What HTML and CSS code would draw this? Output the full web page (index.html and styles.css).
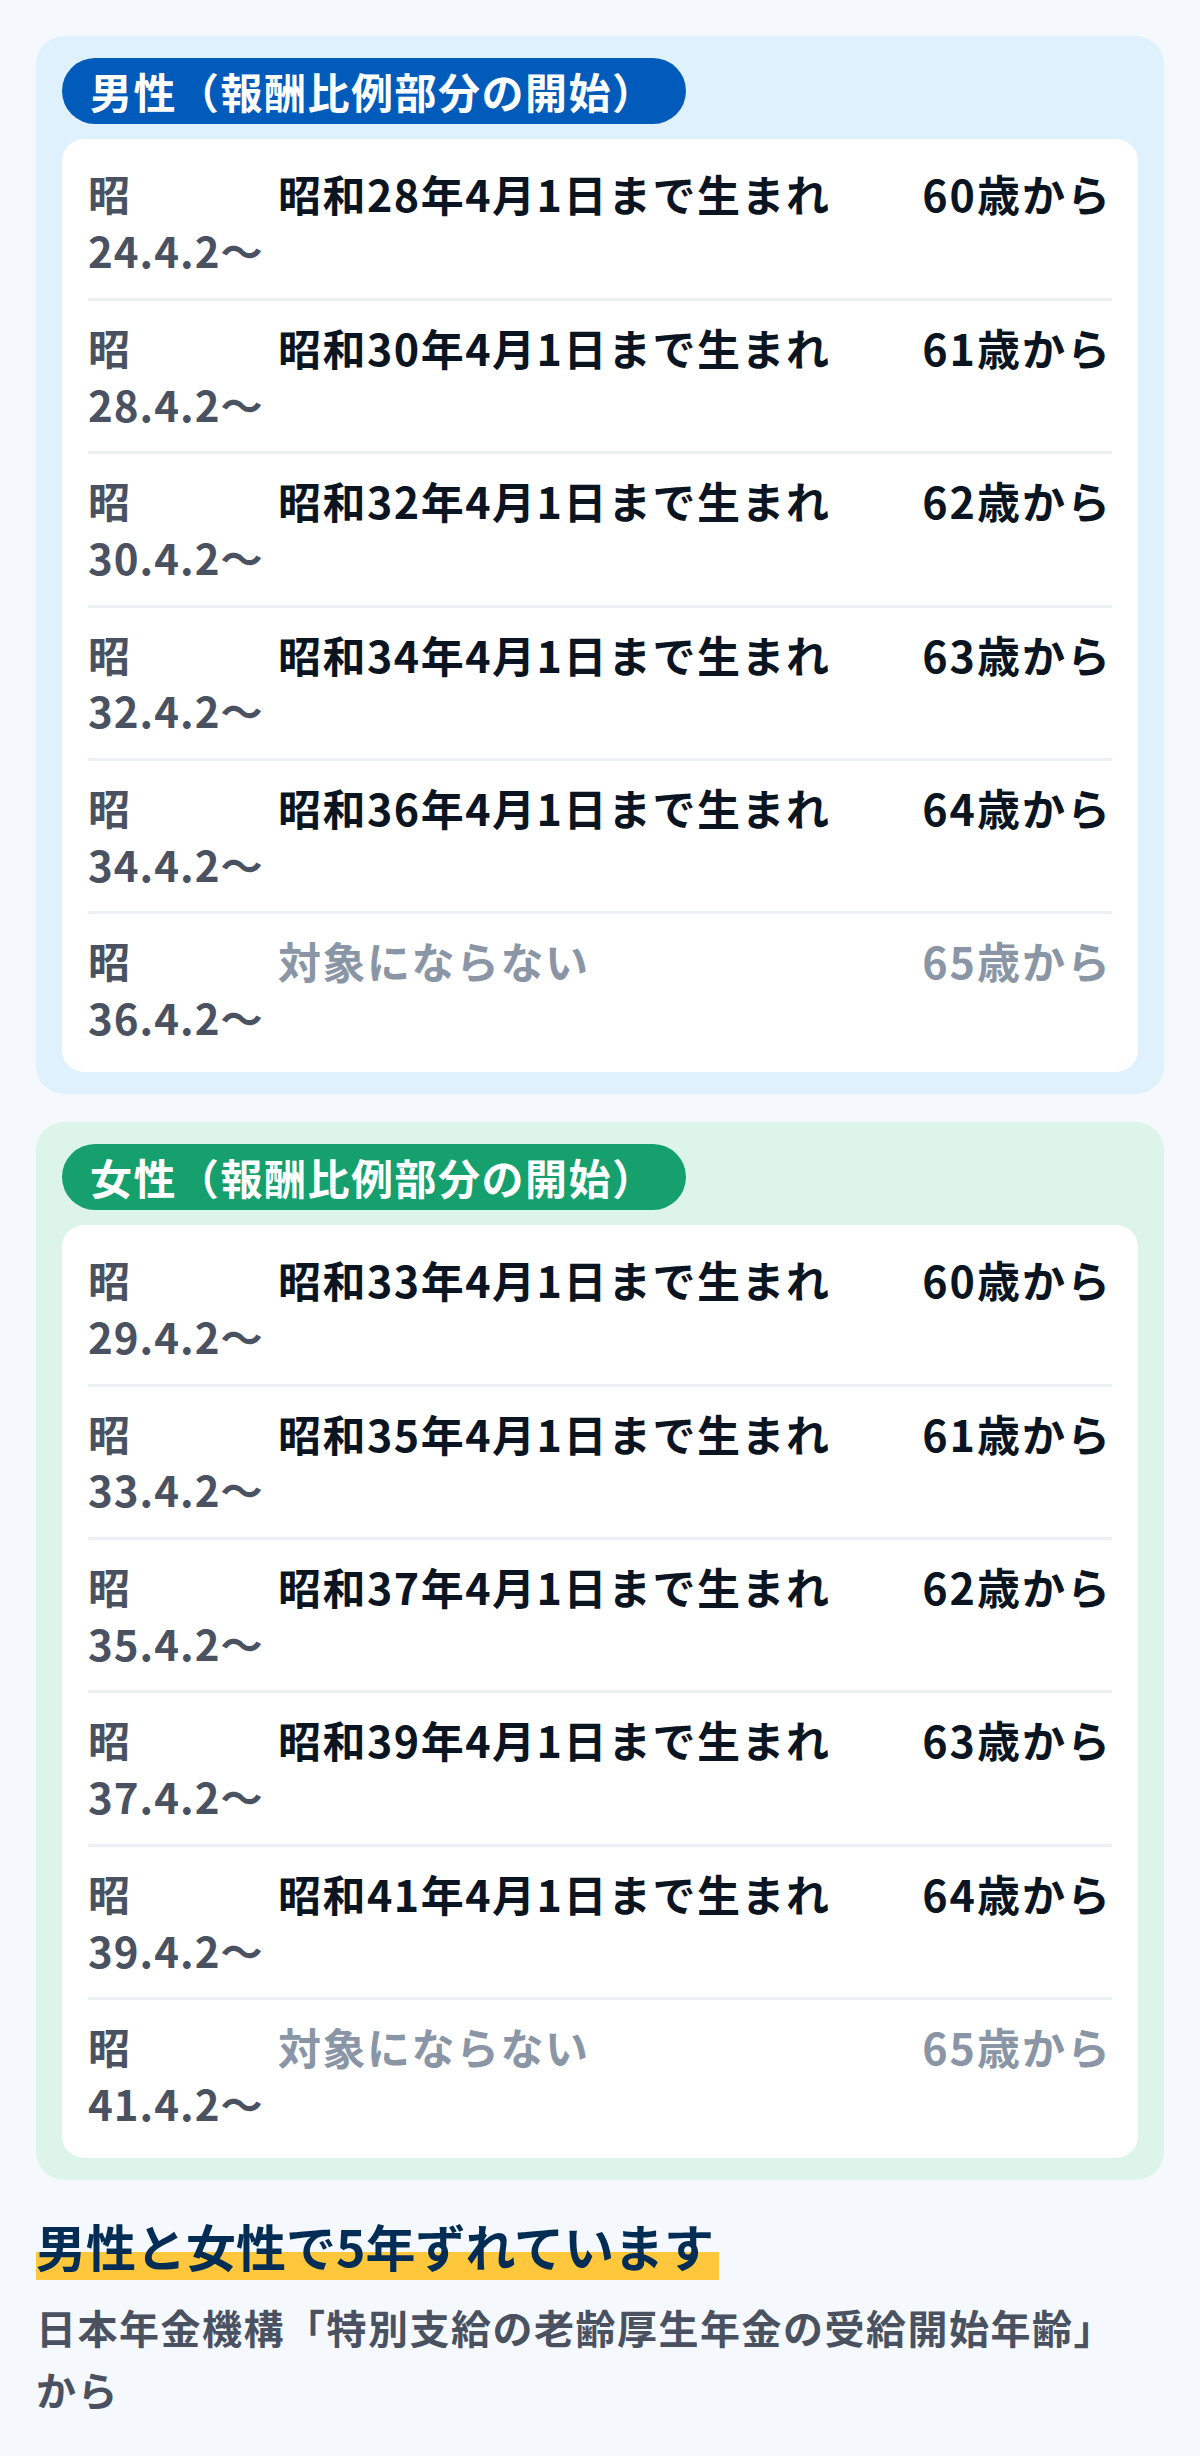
FILE: index.html
```html
<!DOCTYPE html>
<html lang="ja">
<head>
    <meta charset="UTF-8">
    <meta name="viewport" content="width=device-width, initial-scale=1.0">
    <title>特別支給の老齢厚生年金 受給開始年齢</title>
    <link rel="stylesheet" href="styles.css">
</head>
<body>

    <div class="page">

        <section class="group group-male">
            <h3 class="group-badge">男性（報酬比例部分の開始）</h3>
            <div class="table-card">
                <div class="row">
                    <span class="row-from">昭24.4.2〜</span>
                    <span class="row-until">昭和28年4月1日まで生まれ</span>
                    <span class="row-age">60歳から</span>
                </div>
                <div class="row">
                    <span class="row-from">昭28.4.2〜</span>
                    <span class="row-until">昭和30年4月1日まで生まれ</span>
                    <span class="row-age">61歳から</span>
                </div>
                <div class="row">
                    <span class="row-from">昭30.4.2〜</span>
                    <span class="row-until">昭和32年4月1日まで生まれ</span>
                    <span class="row-age">62歳から</span>
                </div>
                <div class="row">
                    <span class="row-from">昭32.4.2〜</span>
                    <span class="row-until">昭和34年4月1日まで生まれ</span>
                    <span class="row-age">63歳から</span>
                </div>
                <div class="row">
                    <span class="row-from">昭34.4.2〜</span>
                    <span class="row-until">昭和36年4月1日まで生まれ</span>
                    <span class="row-age">64歳から</span>
                </div>
                <div class="row row-none">
                    <span class="row-from">昭36.4.2〜</span>
                    <span class="row-until">対象にならない</span>
                    <span class="row-age">65歳から</span>
                </div>
            </div>
        </section>

        <section class="group group-female">
            <h3 class="group-badge">女性（報酬比例部分の開始）</h3>
            <div class="table-card">
                <div class="row">
                    <span class="row-from">昭29.4.2〜</span>
                    <span class="row-until">昭和33年4月1日まで生まれ</span>
                    <span class="row-age">60歳から</span>
                </div>
                <div class="row">
                    <span class="row-from">昭33.4.2〜</span>
                    <span class="row-until">昭和35年4月1日まで生まれ</span>
                    <span class="row-age">61歳から</span>
                </div>
                <div class="row">
                    <span class="row-from">昭35.4.2〜</span>
                    <span class="row-until">昭和37年4月1日まで生まれ</span>
                    <span class="row-age">62歳から</span>
                </div>
                <div class="row">
                    <span class="row-from">昭37.4.2〜</span>
                    <span class="row-until">昭和39年4月1日まで生まれ</span>
                    <span class="row-age">63歳から</span>
                </div>
                <div class="row">
                    <span class="row-from">昭39.4.2〜</span>
                    <span class="row-until">昭和41年4月1日まで生まれ</span>
                    <span class="row-age">64歳から</span>
                </div>
                <div class="row row-none">
                    <span class="row-from">昭41.4.2〜</span>
                    <span class="row-until">対象にならない</span>
                    <span class="row-age">65歳から</span>
                </div>
            </div>
        </section>

        <h2 class="summary"><span class="summary-mark">男性と女性で5年ずれています</span></h2>
        <p class="source">日本年金機構「特別支給の老齢厚生年金の受給開始年齢」<span class="nowrap">から</span></p>

    </div>

</body>
</html>
```

FILE: styles.css
```css
* {
    margin: 0;
    padding: 0;
    box-sizing: border-box;
}

body {
    font-family: 'Noto Sans CJK JP', 'Noto Sans', sans-serif;
    background-color: #f5f9fe;
    color: #0b1522;
}

.page {
    padding: 36px;
}

/* group cards */
.group {
    border-radius: 28px;
    padding: 22px 26px;
}

.group + .group {
    margin-top: 28px;
}

.group-male {
    background-color: #dff1fc;
}

.group-female {
    background-color: #ddf4ea;
}

.group-badge {
    display: inline-block;
    padding: 8px 30px 8px 28px;
    border-radius: 999px;
    color: #fff;
    font-size: 42px;
    font-weight: 700;
    line-height: 1.2;
    letter-spacing: 1.5px;
}

.group-male .group-badge {
    background-color: #005bbb;
}

.group-female .group-badge {
    background-color: #15a06e;
}

.table-card {
    margin-top: 15px;
    background-color: #fff;
    border-radius: 22px;
    padding: 8px 26px 7px;
}

/* rows */
.row {
    display: grid;
    grid-template-columns: 178px 1fr auto;
    column-gap: 12px;
    align-items: start;
    padding: 18px 0 19px;
    border-bottom: 3px solid #edf0f4;
    line-height: 56.7px;
}

.row:last-child {
    border-bottom: none;
}

.row-from {
    font-size: 42px;
    font-weight: 600;
    letter-spacing: 1px;
    color: #4a5261;
}

.row-until,
.row-age {
    font-size: 43px;
    font-weight: 700;
    letter-spacing: 1.5px;
    color: #0b1522;
}

.row-age {
    text-align: right;
    letter-spacing: 2px;
}

.row-none .row-until,
.row-none .row-age {
    color: #8a96a5;
}

/* summary */
.summary {
    margin-top: 38px;
    font-size: 50px;
    font-weight: 700;
    line-height: 1.1;
    color: #032d55;
}

.summary-mark {
    display: inline-block;
    padding: 0 5px 7px 0;
    background: linear-gradient(transparent 55%, #ffc83c 55%);
}

.source {
    margin-top: 16px;
    font-size: 40px;
    font-weight: 600;
    line-height: 62px;
    letter-spacing: 1.5px;
    color: #4a5261;
    font-feature-settings: "fwid" 1;
}

.nowrap {
    white-space: nowrap;
}
```
